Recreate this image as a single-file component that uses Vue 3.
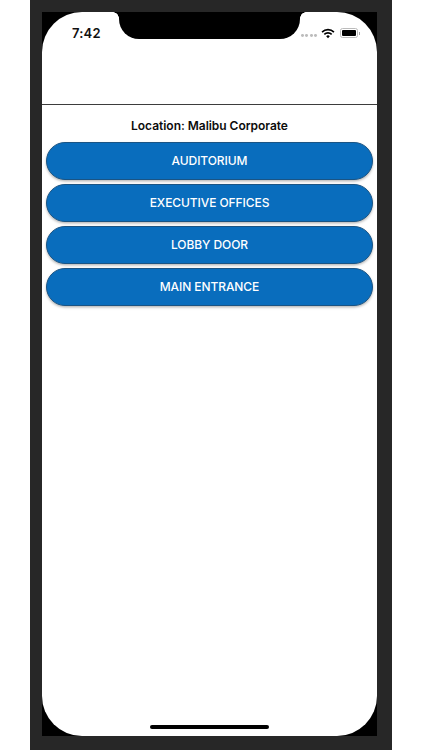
<script setup>
const doors = ['AUDITORIUM', 'EXECUTIVE OFFICES', 'LOBBY DOOR', 'MAIN ENTRANCE']
</script>

<template>
  <div class="page">
    <div class="frame">
      <div class="bezel">
        <div class="screen">
          <header class="status">
            <div class="side left"><span class="time">7:42</span></div>
            <div class="notch"></div>
            <div class="side right">
              <span class="dots"><i></i><i></i><i></i><i></i></span>
              <svg class="wifi" width="14" height="11" viewBox="0 0 16 12">
                <path d="M1.2 4.4a9.6 9.6 0 0 1 13.6 0" fill="none" stroke="#000" stroke-width="1.8" />
                <path d="M3.8 7a6 6 0 0 1 8.4 0" fill="none" stroke="#000" stroke-width="1.8" />
                <path d="M8 11.4 5.9 9.1a3 3 0 0 1 4.2 0Z" fill="#000" />
              </svg>
              <span class="battery"><b></b></span>
              <span class="nub"></span>
            </div>
          </header>
          <div class="navbar"></div>
          <main class="content">
            <h1 class="title">Location: Malibu Corporate</h1>
            <ul class="list">
              <li v-for="d in doors" :key="d" class="door">{{ d }}</li>
            </ul>
          </main>
          <div class="home"></div>
        </div>
      </div>
    </div>
  </div>
</template>

<style scoped>
.page {
  width: 422px;
  height: 750px;
  background: #fff;
  overflow: hidden;
  font-family: Inter, "Liberation Sans", sans-serif;
}
.frame {
  width: 362px;
  height: 750px;
  margin-left: 30px;
  box-sizing: border-box;
  padding: 12px 15px 14px 12px;
  background: #272727;
}
.bezel {
  height: 100%;
  background: #000;
}
.screen {
  position: relative;
  height: 100%;
  display: flex;
  flex-direction: column;
  background: #fff;
  border-radius: 40px;
  overflow: hidden;
}
.status {
  height: 27px;
  display: flex;
  flex: none;
}
.side {
  width: 77px;
  flex: none;
  box-sizing: border-box;
  display: flex;
  align-items: center;
  height: 27px;
  padding-top: 15px;
}
.left {
  padding-left: 30px;
}
.time {
  font-size: 13px;
  font-weight: 600;
  color: #111;
  letter-spacing: 0.2px;
}
.right {
  padding-left: 1px;
}
.dots {
  display: flex;
  gap: 1.6px;
  margin-top: 5px;
}
.dots i {
  width: 2.8px;
  height: 2.8px;
  border-radius: 50%;
  background: #bdbdbd;
}
.wifi {
  margin-left: 4px;
  flex: none;
}
.battery {
  width: 18px;
  height: 10px;
  margin-left: 5px;
  flex: none;
  box-sizing: border-box;
  border: 1px solid #bbb;
  border-radius: 2.5px;
  padding: 1px;
  display: flex;
}
.battery b {
  flex: 1;
  background: #000;
  border-radius: 1px;
}
.nub {
  width: 1.5px;
  height: 3px;
  margin-left: 1px;
  flex: none;
  background: #aaa;
}
.notch {
  position: relative;
  width: 181px;
  height: 27px;
  flex: none;
  background: #000;
  border-radius: 0 0 20px 20px;
}
.notch::before,
.notch::after {
  content: "";
  position: absolute;
  top: 0;
  width: 6px;
  height: 6px;
}
.notch::before {
  left: -6px;
  background: radial-gradient(circle at 0 100%, transparent 5.5px, #000 6px);
}
.notch::after {
  right: -6px;
  background: radial-gradient(circle at 100% 100%, transparent 5.5px, #000 6px);
}
.navbar {
  height: 66px;
  flex: none;
  box-sizing: border-box;
  border-bottom: 1.5px solid #3d3d3d;
}
.content {
  flex: 1;
  padding: 0 4px;
}
.title {
  margin: 13px 0 9px;
  font-size: 12px;
  line-height: 15px;
  font-weight: 600;
  letter-spacing: -0.03px;
  text-align: center;
  color: #0c0c0c;
}
.list {
  list-style: none;
  margin: 0;
  padding: 0;
  display: flex;
  flex-direction: column;
  gap: 4px;
}
.door {
  height: 38px;
  box-sizing: border-box;
  display: flex;
  align-items: center;
  justify-content: center;
  padding-bottom: 2px;
  border: 1px solid #1a5484;
  border-radius: 19px;
  background: #096dbd;
  color: #fff;
  font-size: 12px;
  font-weight: 500;
  letter-spacing: -0.08px;
  box-shadow: 0 1.5px 2.5px rgba(0, 0, 0, 0.28);
}
.home {
  position: absolute;
  left: 108px;
  bottom: 7px;
  width: 119px;
  height: 4.5px;
  border-radius: 3px;
  background: #000;
}
</style>
